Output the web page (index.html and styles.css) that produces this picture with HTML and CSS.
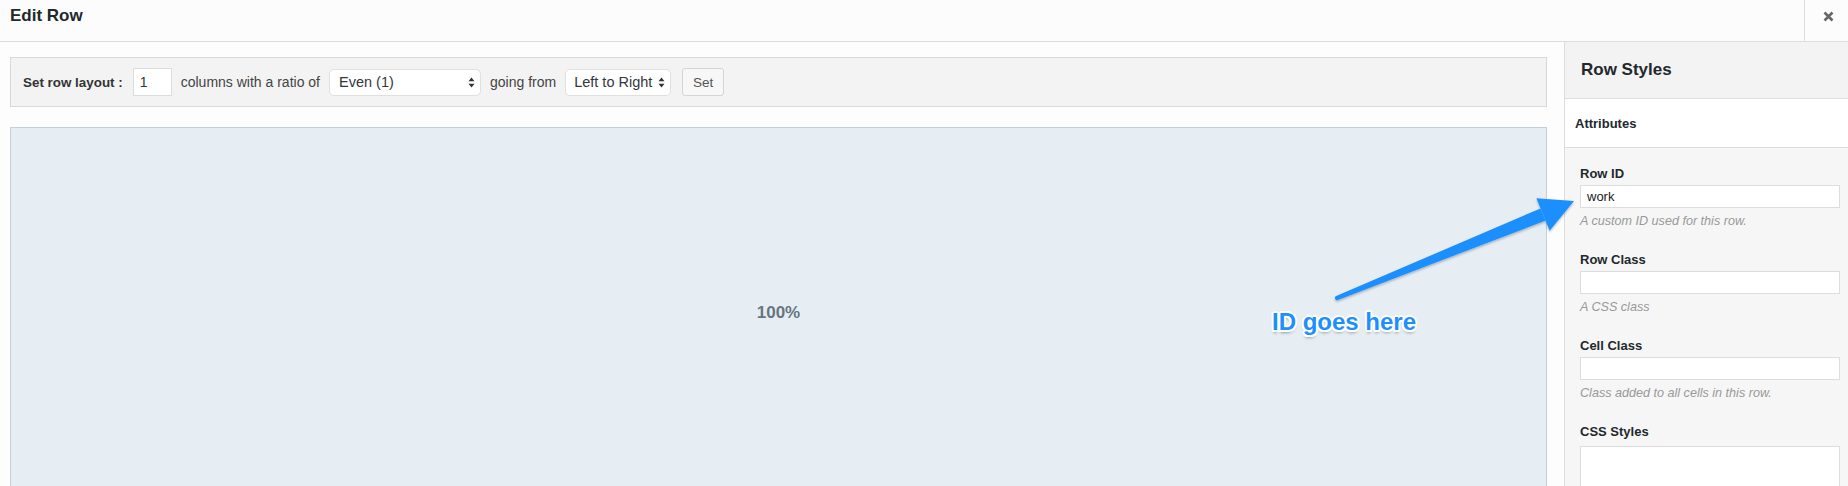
FILE: index.html
```html
<!DOCTYPE html>
<html>
<head>
<meta charset="utf-8">
<title>Edit Row</title>
<link rel="stylesheet" href="styles.css">
</head>
<body>
<div class="dialog">
  <div class="dlg-header">
    <h1 class="dlg-title">Edit Row</h1>
    <div class="dlg-close">
      <svg width="11" height="11" viewBox="0 0 11 11"><path d="M1.5 1.5 L9.5 9.5 M9.5 1.5 L1.5 9.5" stroke="#666" stroke-width="2.6" stroke-linecap="butt"/></svg>
    </div>
  </div>
  <div class="dlg-body">
    <div class="main">
      <div class="toolbar">
        <span class="tb-label">Set row layout :</span>
        <div class="tb-input">1</div>
        <span class="tb-text">columns with a ratio of</span>
        <div class="tb-select sel-ratio"><span>Even (1)</span>
          <svg class="updown" width="7" height="11" viewBox="0 0 7 11"><path d="M3.5 0.5 L6.5 4.2 L0.5 4.2Z M0.5 6.8 L6.5 6.8 L3.5 10.5Z" fill="#333"/></svg>
        </div>
        <span class="tb-text">going from</span>
        <div class="tb-select sel-dir"><span>Left to Right</span>
          <svg class="updown" width="7" height="11" viewBox="0 0 7 11"><path d="M3.5 0.5 L6.5 4.2 L0.5 4.2Z M0.5 6.8 L6.5 6.8 L3.5 10.5Z" fill="#333"/></svg>
        </div>
        <div class="tb-button">Set</div>
      </div>
      <div class="row-preview">
        <span class="cell-width">100%</span>
      </div>
    </div>
    <aside class="sidebar">
      <div class="sb-header">Row Styles</div>
      <div class="sb-section-title">Attributes</div>
      <div class="sb-fields">
        <div class="field">
          <div class="field-label">Row ID</div>
          <div class="field-input">work</div>
          <div class="field-help">A custom ID used for this row.</div>
        </div>
        <div class="field">
          <div class="field-label">Row Class</div>
          <div class="field-input"></div>
          <div class="field-help">A CSS class</div>
        </div>
        <div class="field">
          <div class="field-label">Cell Class</div>
          <div class="field-input"></div>
          <div class="field-help">Class added to all cells in this row.</div>
        </div>
        <div class="field field-css">
          <div class="field-label">CSS Styles</div>
          <div class="field-textarea"></div>
        </div>
      </div>
    </aside>
  </div>
</div>

<svg class="annot-arrow" width="1848" height="486" viewBox="0 0 1848 486">
  <defs>
    <filter id="sh" x="-10%" y="-10%" width="120%" height="130%">
      <feDropShadow dx="0" dy="1.5" stdDeviation="1.2" flood-color="#000" flood-opacity="0.28"/>
    </filter>
  </defs>
  <g filter="url(#sh)" fill="#1e8ffe">
    <path d="M1337.8 299.9 L1545.6 220.6 L1540.4 208.4 L1336.2 296.1 A2 2 0 0 0 1337.8 299.9Z"/>
    <path d="M1574 201 L1536.4 198.3 L1549.6 230.7Z"/>
  </g>
</svg>
<div class="annot-text">ID goes here</div>
</body>
</html>
```

FILE: styles.css
```css
* { box-sizing: border-box; }
html, body {
  margin: 0;
  padding: 0;
  width: 1848px;
  height: 486px;
  overflow: hidden;
  background: #fdfdfd;
  font-family: "Liberation Sans", Arial, Helvetica, sans-serif;
  color: #32373c;
}
.dialog {
  display: flex;
  flex-direction: column;
  height: 486px;
  overflow: hidden;
}
.dlg-header {
  height: 42px;
  flex: none;
  display: flex;
  background: #fcfcfc;
  border-bottom: 1px solid #dddddd;
}
.dlg-title {
  flex: 1;
  margin: 0;
  padding: 6px 0 0 10px;
  font-size: 17px;
  line-height: 20px;
  font-weight: bold;
  color: #23282d;
}
.dlg-close {
  width: 44px;
  border-left: 1px solid #dddddd;
  display: flex;
  justify-content: center;
  padding-top: 11px;
  padding-left: 4px;
}
.dlg-body {
  flex: 1;
  display: flex;
  min-height: 0;
  overflow: hidden;
}
.main {
  flex: 1;
  padding: 15px 17px 0 10px;
  display: flex;
  flex-direction: column;
  gap: 20px;
  overflow: hidden;
}
.toolbar {
  flex: none;
  height: 50px;
  background: #f3f3f3;
  border: 1px solid #d9d9d9;
  display: flex;
  align-items: center;
  padding: 0 12px;
  gap: 9px;
  font-size: 13px;
}
.tb-label {
  font-weight: bold;
  font-size: 13.4px;
  color: #333;
  margin-right: 1px;
}
.tb-text { color: #444; font-size: 14px; }
.tb-input {
  width: 39px;
  height: 28px;
  background: #fff;
  border: 1px solid #dcdcdc;
  font-size: 14px;
  line-height: 26px;
  padding-left: 6px;
  color: #32373c;
}
.tb-select {
  height: 27px;
  background: #fff;
  border: 1px solid #e0e0e0;
  border-radius: 5px;
  display: flex;
  align-items: center;
  justify-content: space-between;
  padding: 0 5px 0 9px;
  font-size: 14.5px;
  color: #32373c;
}
.sel-ratio { width: 152px; }
.sel-dir { width: 106px; padding-left: 8px; }
.tb-button {
  margin-left: 2px;
  width: 42px;
  height: 28px;
  border: 1px solid #d5d5d5;
  border-radius: 3px;
  background: #f7f7f7;
  display: flex;
  align-items: center;
  justify-content: center;
  font-size: 13.5px;
  color: #555;
}
.row-preview {
  height: 372px;
  flex: none;
  background: #e6eef4;
  border: 1px solid #c4d0d9;
  display: flex;
  align-items: center;
  justify-content: center;
}
.cell-width {
  font-size: 17px;
  font-weight: bold;
  color: #687580;
}
.sidebar {
  width: 284px;
  flex: none;
  background: #f6f6f6;
  border-left: 1px solid #dddddd;
  display: flex;
  flex-direction: column;
}
.sb-header {
  height: 57px;
  flex: none;
  display: flex;
  align-items: center;
  padding-left: 16px;
  background: #f3f3f3;
  border-bottom: 1px solid #dddddd;
  font-size: 17px;
  font-weight: bold;
  color: #23282d;
}
.sb-section-title {
  height: 49px;
  flex: none;
  display: flex;
  align-items: center;
  padding-left: 10px;
  background: #ffffff;
  border-bottom: 1px solid #dddddd;
  font-size: 13px;
  font-weight: bold;
  color: #23282d;
}
.sb-fields {
  padding: 18px 8px 0 15px;
}
.field { margin-bottom: 23px; }
.field-label {
  font-size: 13px;
  line-height: 16px;
  font-weight: bold;
  color: #23282d;
  margin-bottom: 3px;
}
.field-input {
  height: 23px;
  background: #fff;
  border: 1px solid #dddddd;
  font-size: 13px;
  line-height: 21px;
  padding-left: 6px;
  color: #222;
}
.field-help {
  margin-top: 6px;
  font-size: 12.6px;
  line-height: 15px;
  font-style: italic;
  color: #999;
}
.field-css .field-label { margin-bottom: 6px; }
.field-textarea {
  height: 80px;
  background: #fff;
  border: 1px solid #dddddd;
}
.annot-arrow {
  position: absolute;
  left: 0;
  top: 0;
  pointer-events: none;
}
.annot-text {
  position: absolute;
  left: 1272px;
  top: 310px;
  font-size: 24px;
  line-height: 24px;
  font-weight: bold;
  color: #1e8ffe;
  text-shadow:
    -2px 0 0 #fff, 2px 0 0 #fff, 0 -2px 0 #fff, 0 2px 0 #fff,
    -1.5px -1.5px 0 #fff, 1.5px -1.5px 0 #fff, -1.5px 1.5px 0 #fff, 1.5px 1.5px 0 #fff,
    0 3px 3px rgba(0,0,0,0.35);
}
```
